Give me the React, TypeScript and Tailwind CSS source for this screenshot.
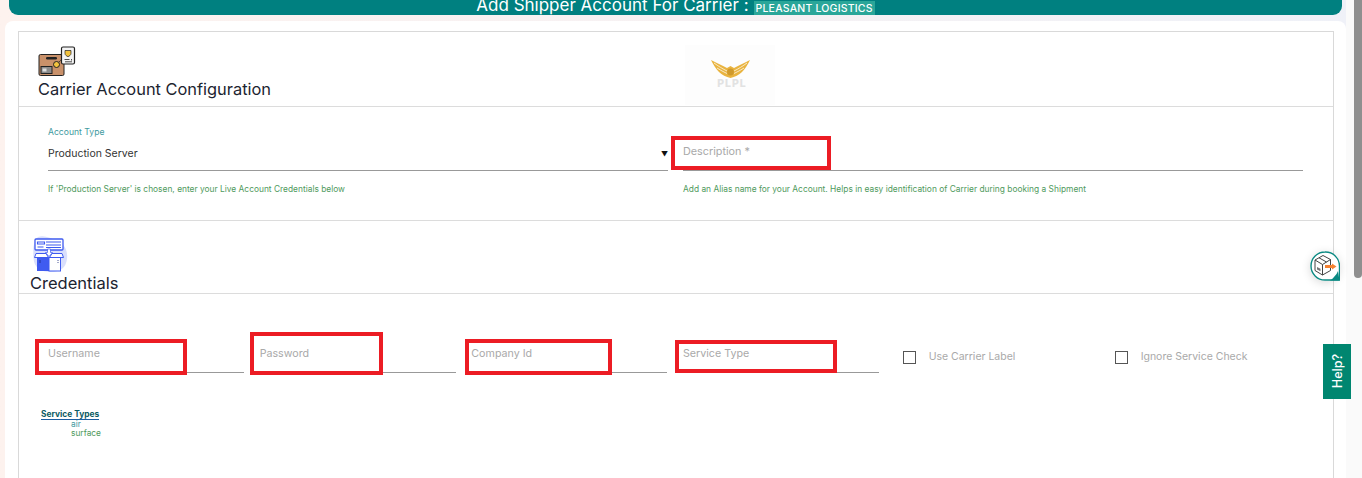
const fields = [
  { label: 'Username' },
  { label: 'Password' },
  { label: 'Company Id' },
  { label: 'Service Type' },
]

const checks = ['Use Carrier Label', 'Ignore Service Check']

function CarrierIcon() {
  return (
    <svg width="38" height="31" viewBox="0 0 38 31" className="block">
      <rect x="1" y="8.5" width="25" height="21" rx="1.5" fill="#c9916a" stroke="#222" strokeWidth="1" />
      <rect x="8" y="11" width="11" height="2.6" rx="1.3" fill="#222" />
      <rect x="3" y="20.5" width="11" height="7" fill="#8b8b8b" stroke="#222" strokeWidth="1" />
      <rect x="4.5" y="22.5" width="4" height="3" fill="#ddd" />
      <circle cx="18.5" cy="18.5" r="3" fill="#f2c23e" stroke="#222" strokeWidth="1" />
      <path d="M21 16 L24 13" stroke="#222" strokeWidth="1" strokeDasharray="1 1" />
      <rect x="23.5" y="1" width="13" height="17" rx="1.5" fill="#f4f4f4" stroke="#222" strokeWidth="1.2" />
      <path d="M27 4.5 h6 v3 c0 1.5 -1.5 2.5 -3 3.2 c-1.5 -.7 -3 -1.7 -3 -3.2 z" fill="#f2c23e" stroke="#222" strokeWidth=".7" />
      <path d="M26.5 13.5 h5 M27 15.8 h7 M33.5 13 v1.5" stroke="#222" strokeWidth=".8" />
    </svg>
  )
}

function LogoIcon() {
  return (
    <svg width="90" height="60" viewBox="0 0 90 60" className="block">
      <rect x="0" y="0" width="90" height="60" fill="#fdfdfd" />
      <path d="M45.5 33 C41 32 37 30 34 27 C31 24 28 19 26 15 C31 18 37 20 42 23 L45.500 21 L49 23 C54 20 60 18 65 15 C63 19 60 24 57 27 C54 30 50 32 45.500 33 Z" fill="#e9b440" />
      <path d="M29 18 C33 21 38 24 42 26 M62 18 C58 21 53 24 49 26 M32 23 C35 25 39 27 42 28.500 M59 23 C56 25 52 27 49 28.500" stroke="#fff" strokeWidth=".7" fill="none" />
      <circle cx="45.5" cy="27" r="3.4" fill="#d09a2c" />
      <text x="47" y="42" textAnchor="middle" fontSize="10.5" fontWeight="800" letterSpacing="1" fill="#e2e2e2">PLPL</text>
    </svg>
  )
}

function CredentialsIcon() {
  return (
    <svg width="36" height="37" viewBox="0 0 36 37" className="block">
      <path d="M6 1 C12 -1 19 2 25 5 C33 8 36 15 35 23 C34 31 29 36 19 36 C9 36 2 32 1.500 22 C1 14 1 5 6 1 Z" fill="#d9dffc" />
      <rect x="3" y="3" width="28" height="11" rx="1" fill="#fff" stroke="#3f5bf0" strokeWidth="1.300" />
      <path d="M5.500 6 h7 v2 h-7 z M14 6 h15 M5.500 11 h6 M14 9 h15 M14 11.500 h15" stroke="#3f5bf0" strokeWidth="1.100" fill="none" />
      <path d="M15.500 13 h3 v3.500 h2 l-3.500 4 l-3.500 -4 h2 z" fill="#fff" stroke="#3f5bf0" strokeWidth=".7" />
      <path d="M4 17.500 h10 l2.500 4 h-14 z M30 17.500 h-10 l-2.500 4 h14 z" fill="#fff" stroke="#3f5bf0" strokeWidth="1" />
      <rect x="5" y="21.500" width="12" height="13.500" fill="#3f5bf0" />
      <rect x="17" y="21.500" width="11.500" height="13.500" fill="#fff" stroke="#3f5bf0" strokeWidth="1" />
      <path d="M8 24 v3 M26 24 v1 M26 26 v1" stroke="#1d2b80" strokeWidth=".8" />
    </svg>
  )
}

function ShipIcon() {
  return (
    <svg width="30" height="30" viewBox="0 0 30 30" className="block">
      <path d="M15 1 A14 14 0 1 0 15 29 H29.500 V15 A14 14 0 0 0 15 1 Z" fill="#fff" stroke="#0b8a83" strokeWidth="1.400" />
      <path d="M24 26 A14 14 0 0 0 28 20 L29.500 29.500 H20 A14 14 0 0 0 24 26 Z" fill="#0b8a83" />
      <path d="M5 9 L13 4.500 L20.500 8.500 L20.500 19.500 L12.500 24 L5 19.500 Z M5 9 L12.500 13.500 L20.500 8.500 M12.500 13.500 V24 M9 6.800 L16.500 11" fill="none" stroke="#444" strokeWidth="1" />
      <path d="M7 16 l3.500 1.700 v2.500 l-3.500 -1.700 z" fill="#777" />
      <path d="M15 14 h7 v-1.500 l4.500 3 l-4.500 3 v-1.500 h-7 z" fill="#f58233" />
    </svg>
  )
}

function RedBox({ className }: { className: string }) {
  return <div className={`absolute border-[4px] border-[#ec1c24] ${className}`} />
}

export default function App() {
  return (
    <div
      className="relative flex h-[478px] w-[1362px] overflow-hidden bg-gradient-to-r from-[#fdf2ee] to-[#eff1f8] text-[#1c2430]"
      style={{ fontFamily: 'Inter, "Noto Sans", sans-serif' }}
    >
      <div className="w-[1346px] shrink-0">
        {/* Top bar */}
        <div className="ml-[9px] mr-[4px] flex h-[15px] items-end justify-center overflow-hidden rounded-b-[9px] bg-[#008080] text-white">
          <span className="text-[17px] leading-[20px]">Add Shipper Account For Carrier :</span>
          <span className="ml-[5px] bg-[#2aa699] px-[2px] text-[10.5px] font-medium leading-[15px] tracking-[0.2px] translate-y-[1px]">PLEASANT LOGISTICS</span>
        </div>

        {/* Card */}
        <div className="ml-[5px] mt-[6px] h-[500px] rounded-[8px] bg-white pl-[13px] pr-[12px] pt-[10px]">
          <div className="h-[480px] border border-[#d9d9d9]">
            {/* Heading */}
            <div className="relative h-[75px] border-b border-[#dcdcdc] pl-[19px] pt-[14px]">
              <CarrierIcon />
              <h2 className="mt-px text-[16.4px] leading-[22px]">Carrier Account Configuration</h2>
              <div className="absolute left-[666px] top-[13px]">
                <LogoIcon />
              </div>
            </div>

            {/* Account type and description */}
            <div className="flex h-[114px] border-b border-[#dcdcdc]">
              <div className="ml-[29px] w-[620px] pt-[20px]">
                <div className="text-[8.6px] leading-[11px] text-[#3f9aa0]">Account Type</div>
                <div className="mt-[4px] flex h-[29px] items-start justify-between border-b border-[#999] pt-[5px] text-[10.5px] leading-[14px]">
                  <span className="text-[#333]">Production Server</span>
                  <span className="pt-[1px] text-[7px] text-[#111]">▼</span>
                </div>
                <div className="mt-[13px] text-[8.4px] leading-[11px] text-[#4f9a5d]">If 'Production Server' is chosen, enter your Live Account Credentials below</div>
              </div>
              <div className="ml-[15px] w-[620px] pt-[20px]">
                <div className="flex h-[44px] items-start border-b border-[#999] pt-[18px] text-[10.8px] leading-[13px] text-[#a9a9a9]">Description *</div>
                <div className="mt-[13px] text-[8.4px] leading-[11px] text-[#4f9a5d]">Add an Alias name for your Account. Helps in easy identification of Carrier during booking a Shipment</div>
              </div>
            </div>

            {/* Credentials */}
            <div className="h-[73px] border-b border-[#dcdcdc] pl-[13px] pt-[15px]">
              <CredentialsIcon />
              <h2 className="-ml-[2px] text-[16.5px] leading-[20px]">Credentials</h2>
            </div>

            <div className="flex pl-[29px] pt-[44px]">
              {fields.map((field) => (
                <div key={field.label} className="mr-[15.67px] h-[35px] w-[196px] border-b border-[#999] pt-[9px] text-[10.7px] leading-[13px] text-[#a9a9a9]">
                  {field.label}
                </div>
              ))}
              <div className="ml-[8px] flex">
                {checks.map((check) => (
                  <div key={check} className="flex h-[14px] w-[212px] items-center translate-y-[12px]">
                    <span className="h-[13px] w-[13px] border border-[#555]" />
                    <span className="ml-[13px] text-[10.5px] text-[#a9a9a9]">{check}</span>
                  </div>
                ))}
              </div>
            </div>

            <div className="ml-[22px] mt-[37px] w-[58px] text-[8.4px] leading-[9px]">
              <div className="whitespace-nowrap border-b border-[#1c5fa0] font-bold leading-[9px] text-[#0d5c63]">Service Types</div>
              <div className="ml-[30px] text-[#3f9aa0]">air</div>
              <div className="ml-[30px] text-[#4f9a5d]">surface</div>
            </div>
          </div>
        </div>
      </div>

      {/* Scrollbar */}
      <div className="flex-1 bg-[#fafafa] pl-[8px]">
        <div className="h-[278px] rounded-b-[4px] bg-[#8f8f8f]" />
      </div>

      {/* Annotations */}
      <RedBox className="left-[671px] top-[136px] h-[34px] w-[160px]" />
      <RedBox className="left-[35px] top-[339px] h-[36px] w-[152px]" />
      <RedBox className="left-[250px] top-[332px] h-[43px] w-[133px]" />
      <RedBox className="left-[465px] top-[339px] h-[36px] w-[147px]" />
      <RedBox className="left-[675px] top-[340px] h-[33px] w-[162px]" />

      {/* Floating widgets */}
      <div className="absolute left-[1310px] top-[251px] rounded-full shadow-[0_2px_10px_rgba(0,0,0,0.15)]">
        <ShipIcon />
      </div>
      <div className="absolute left-[1323px] top-[344px] flex h-[55px] w-[28px] items-center justify-center bg-[#008670] text-[12.5px] font-medium text-white">
        <span className="rotate-180 translate-x-[1px] [writing-mode:vertical-rl]">Help?</span>
      </div>
    </div>
  )
}
